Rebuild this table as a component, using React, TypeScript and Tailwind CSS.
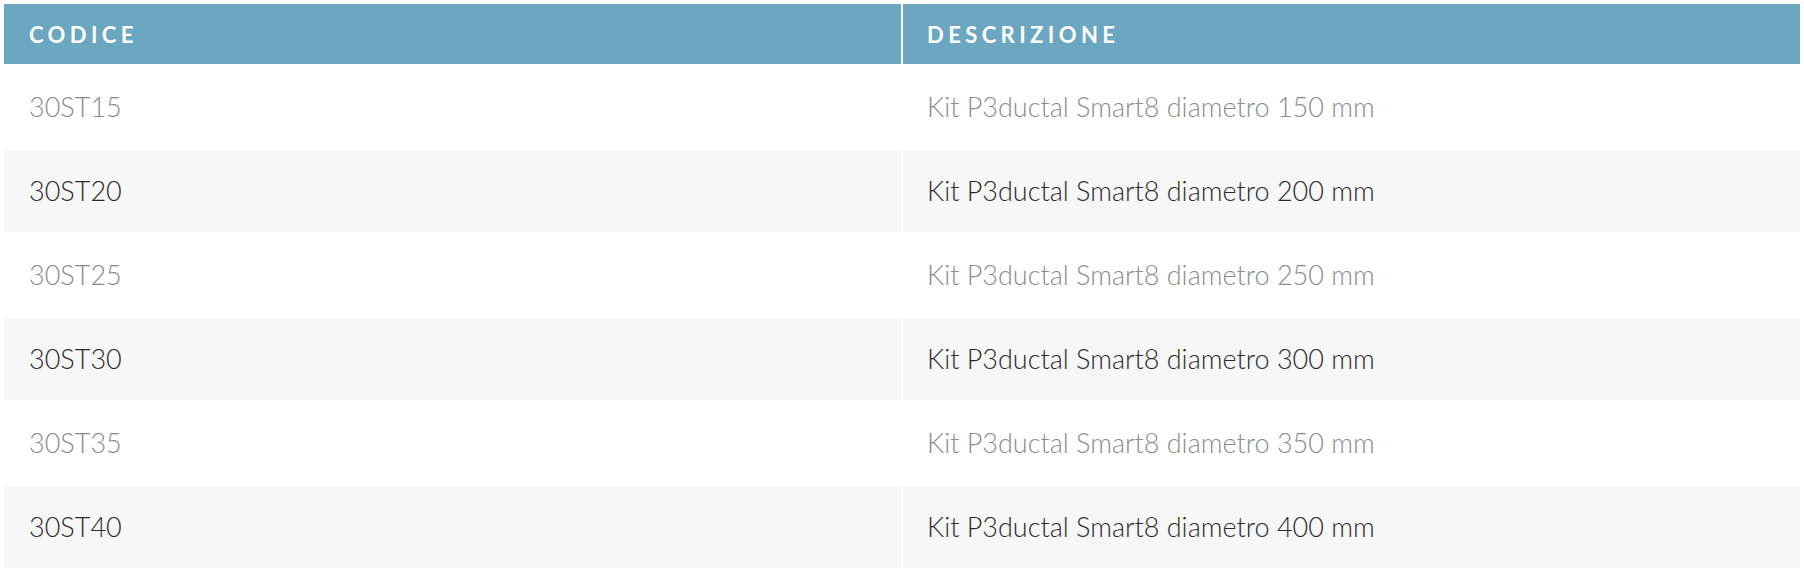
const rows = [
  { code: '30ST15', desc: 'Kit P3ductal Smart8 diametro 150 mm' },
  { code: '30ST20', desc: 'Kit P3ductal Smart8 diametro 200 mm' },
  { code: '30ST25', desc: 'Kit P3ductal Smart8 diametro 250 mm' },
  { code: '30ST30', desc: 'Kit P3ductal Smart8 diametro 300 mm' },
  { code: '30ST35', desc: 'Kit P3ductal Smart8 diametro 350 mm' },
  { code: '30ST40', desc: 'Kit P3ductal Smart8 diametro 400 mm' },
]

export default function App() {
  return (
    <div className="bg-white p-[2px] font-['Lato','Noto_Sans',sans-serif]">
      <table className="w-full table-fixed border-separate border-spacing-[2px]">
        <thead>
          <tr>
            <th className="h-[60px] bg-[#6ca7c2] pl-[25px] text-left text-[22px] font-bold uppercase tracking-[0.2em] text-white">Codice</th>
            <th className="h-[60px] bg-[#6ca7c2] pl-[24px] text-left text-[22px] font-bold uppercase tracking-[0.2em] text-white">Descrizione</th>
          </tr>
        </thead>
        <tbody>
          {rows.map((r, i) => {
            const even = i % 2 === 1
            const cell = even
              ? 'h-[82px] bg-[#f7f7f7] text-[#2a2a2a]'
              : 'h-[82px] bg-white text-[#8c8c8c]'
            return (
              <tr key={r.code}>
                <td className={`${cell} pl-[25px] text-[27px] font-light`}>{r.code}</td>
                <td className={`${cell} pl-[24px] text-[27px] font-light`}>{r.desc}</td>
              </tr>
            )
          })}
        </tbody>
      </table>
    </div>
  )
}
